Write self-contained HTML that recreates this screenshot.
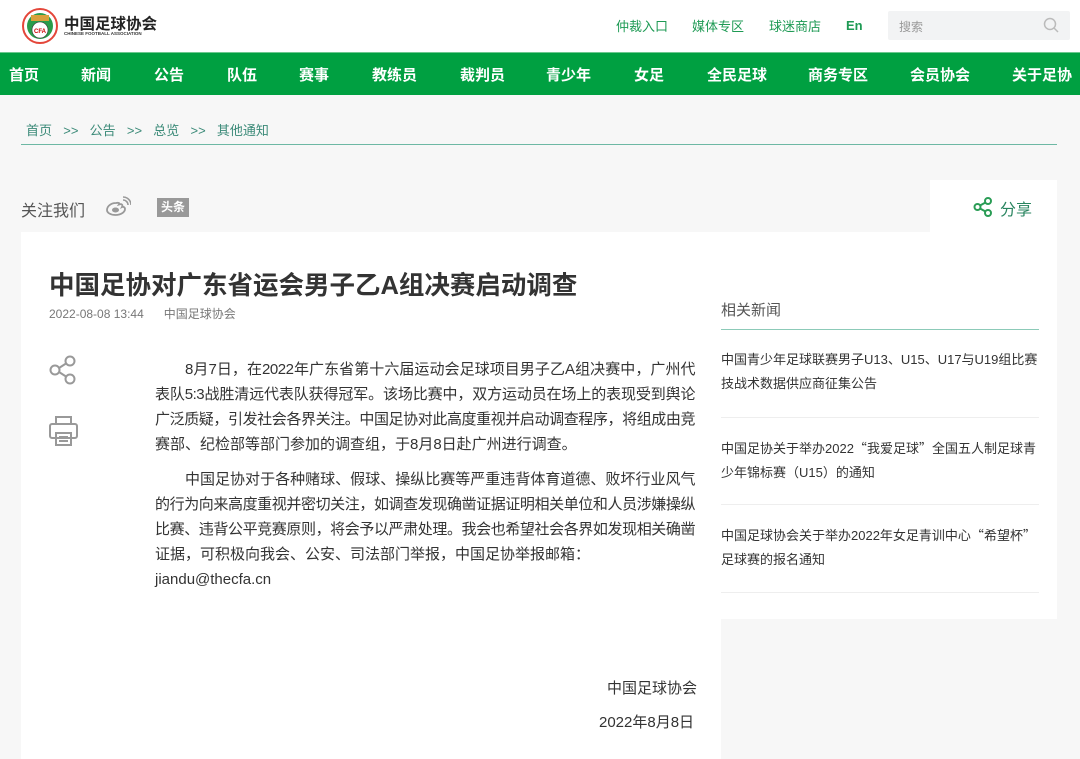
<!DOCTYPE html>
<html><head><meta charset="utf-8"><style>
*{margin:0;padding:0;box-sizing:border-box}
body{width:1080px;height:752px;overflow:hidden;background:#f7f7f7;font-family:"Liberation Sans","Noto Sans CJK SC",sans-serif;position:relative;color:#333}
.a{position:absolute;white-space:nowrap}
.top{position:absolute;left:0;top:0;width:1080px;height:52px;background:#fff}
.nav{position:absolute;left:0;top:52px;width:1080px;height:43px;background:#00a041;border-top:1px solid #6cc88f}
.nav span{position:absolute;top:11px;color:#fff;font-weight:bold;font-size:15px}
.tl{color:#1e9a54;font-size:13px;top:16px}
.body{position:absolute;left:155px;top:357px;width:540px;font-size:15px;line-height:25px;color:#333;letter-spacing:-0.5px}
.body div{white-space:nowrap;text-align:justify;text-align-last:justify;height:25px}
.body div.l{text-align-last:left;letter-spacing:0}
.body div.i{padding-left:30px}
.body div.g{margin-top:10px}
.rn{position:absolute;left:721px;font-size:13px;line-height:24px;color:#333;white-space:nowrap}
.q{font-family:"Noto Sans CJK SC",sans-serif}
.sep{position:absolute;left:721px;width:318px;height:1px;background:#eee}
</style></head><body>
<div class="top"></div>
<svg class="a" style="left:22px;top:8px" width="36" height="36" viewBox="0 0 36 36"><circle cx="18" cy="18" r="17" fill="#fff" stroke="#e4463a" stroke-width="2"/><circle cx="18" cy="18" r="13" fill="#2a9c4a"/><rect x="9" y="7" width="18" height="6" fill="#d9a13a"/><circle cx="18" cy="22" r="8" fill="#fff" stroke="#333" stroke-width=".6"/><text x="18" y="25" font-size="6" text-anchor="middle" fill="#c00" font-weight="bold">CFA</text></svg>
<div class="a" style="left:64px;top:12px;font-size:15.5px;font-weight:bold;color:#222">中国足球协会</div>
<div class="a" style="left:64px;top:31px;font-size:4.5px;color:#333;font-weight:bold">CHINESE FOOTBALL ASSOCIATION</div>
<div class="a tl" style="left:616px">仲裁入口</div>
<div class="a tl" style="left:692px">媒体专区</div>
<div class="a tl" style="left:769px">球迷商店</div>
<div class="a tl" style="left:846px;font-weight:bold;top:18px">En</div>
<div class="a" style="left:888px;top:11px;width:182px;height:29px;background:#f2f3f4;border-radius:2px"></div>
<div class="a" style="left:899px;top:18px;font-size:12px;color:#999">搜索</div>
<svg class="a" style="left:1043px;top:17px" width="16" height="16" viewBox="0 0 16 16"><circle cx="7" cy="7" r="5.5" fill="none" stroke="#bbb" stroke-width="1.5"/><path d="M11 11l4 4" stroke="#bbb" stroke-width="1.5"/></svg>
<div class="nav">
<span style="left:9px">首页</span><span style="left:81px">新闻</span><span style="left:154px">公告</span><span style="left:227px">队伍</span><span style="left:299px">赛事</span><span style="left:372px">教练员</span><span style="left:460px">裁判员</span><span style="left:546px">青少年</span><span style="left:634px">女足</span><span style="left:707px">全民足球</span><span style="left:808px">商务专区</span><span style="left:910px">会员协会</span><span style="left:1012px">关于足协</span>
</div>
<div class="a" style="left:26px;top:120px;font-size:13px;color:#3b8a78;word-spacing:2px">首页 &nbsp;&gt;&gt;&nbsp; 公告 &nbsp;&gt;&gt;&nbsp; 总览 &nbsp;&gt;&gt;&nbsp; 其他通知</div>
<div class="a" style="left:21px;top:144px;width:1036px;height:1px;background:#6db8a4"></div>
<div class="a" style="left:21px;top:197px;font-size:16px;color:#555">关注我们</div>
<svg class="a" style="left:106px;top:196px" width="25" height="20" viewBox="0 0 25 20"><path d="M10 7C4 7 1 11 1 14c0 3 4 5 8.5 5C15 19 19 16 19 13c0-2-2-2.5-3-2 1-2 0-3.5-3-2.5C14 7 12.5 6.5 10 7z" fill="none" stroke="#999" stroke-width="1.8"/><ellipse cx="9.5" cy="14" rx="3.5" ry="2.5" fill="#999"/><path d="M17 4a5 5 0 0 1 5 5M17 1a8 8 0 0 1 8 8" fill="none" stroke="#999" stroke-width="1.6"/></svg>
<div class="a" style="left:157px;top:198px;width:32px;height:19px;background:#999;color:#fff;font-size:12px;font-weight:bold;text-align:center;line-height:19px">头条</div>
<div class="a" style="left:930px;top:180px;width:127px;height:52px;background:#fff"></div>
<svg class="a" style="left:973px;top:197px" width="20" height="20" viewBox="0 0 20 20" fill="none" stroke="#2a9c55" stroke-width="2"><circle cx="4.5" cy="10" r="3"/><circle cx="15" cy="4" r="3"/><circle cx="15" cy="16" r="3"/><path d="M7 8.5l5.5-3M7 11.5l5.5 3"/></svg>
<div class="a" style="left:1000px;top:196px;font-size:16px;color:#2a8560">分享</div>
<div class="a" style="left:21px;top:232px;width:1036px;height:387px;background:#fff"></div>
<div class="a" style="left:21px;top:619px;width:700px;height:140px;background:#fff"></div>
<div class="a" style="left:49px;top:265px;font-size:25.5px;font-weight:bold;color:#333">中国足协对广东省运会男子乙A组决赛启动调查</div>
<div class="a" style="left:49px;top:305px;font-size:12px;color:#777">2022-08-08 13:44 &nbsp;&nbsp;&nbsp;&nbsp; 中国足球协会</div>
<svg class="a" style="left:48px;top:355px" width="30" height="30" viewBox="0 0 30 30" fill="none" stroke="#999" stroke-width="2"><circle cx="7" cy="15" r="4.5"/><circle cx="22" cy="6" r="4.5"/><circle cx="22" cy="24" r="4.5"/><path d="M11 13l7-4.5M11 17l7 4.5"/></svg>
<svg class="a" style="left:48px;top:415px" width="31" height="32" viewBox="0 0 31 32" fill="none" stroke="#999" stroke-width="2"><path d="M8 9V2h15v7"/><rect x="2" y="9" width="27" height="14" rx="2"/><rect x="8" y="18" width="15" height="12"/><path d="M11 22h9M11 26h9"/></svg>
<div class="body">
<div class="i">8月7日，在2022年广东省第十六届运动会足球项目男子乙A组决赛中，广州代</div>
<div>表队5:3战胜清远代表队获得冠军。该场比赛中，双方运动员在场上的表现受到舆论</div>
<div>广泛质疑，引发社会各界关注。中国足协对此高度重视并启动调查程序，将组成由竞</div>
<div class="l">赛部、纪检部等部门参加的调查组，于8月8日赴广州进行调查。</div>
<div class="i g">中国足协对于各种赌球、假球、操纵比赛等严重违背体育道德、败坏行业风气</div>
<div>的行为向来高度重视并密切关注，如调查发现确凿证据证明相关单位和人员涉嫌操纵</div>
<div>比赛、违背公平竞赛原则，将会予以严肃处理。我会也希望社会各界如发现相关确凿</div>
<div class="l">证据，可积极向我会、公安、司法部门举报，中国足协举报邮箱：</div>
<div class="l">jiandu@thecfa.cn</div>
</div>
<div class="a" style="left:607px;top:677px;font-size:15px">中国足球协会</div>
<div class="a" style="left:599px;top:711px;font-size:15px">2022年8月8日</div>
<div class="a" style="left:721px;top:299px;font-size:15px;color:#555">相关新闻</div>
<div class="a" style="left:721px;top:329px;width:318px;height:1px;background:#8ccab8"></div>
<div class="rn" style="top:348px">中国青少年足球联赛男子U13、U15、U17与U19组比赛<br>技战术数据供应商征集公告</div>
<div class="sep" style="top:417px"></div>
<div class="rn" style="top:436px">中国足协关于举办2022<span class="q">“</span>我爱足球<span class="q">”</span>全国五人制足球青<br>少年锦标赛（U15）的通知</div>
<div class="sep" style="top:504px"></div>
<div class="rn" style="top:523px">中国足球协会关于举办2022年女足青训中心<span class="q">“</span>希望杯<span class="q">”</span><br>足球赛的报名通知</div>
<div class="sep" style="top:592px"></div>
</body></html>
